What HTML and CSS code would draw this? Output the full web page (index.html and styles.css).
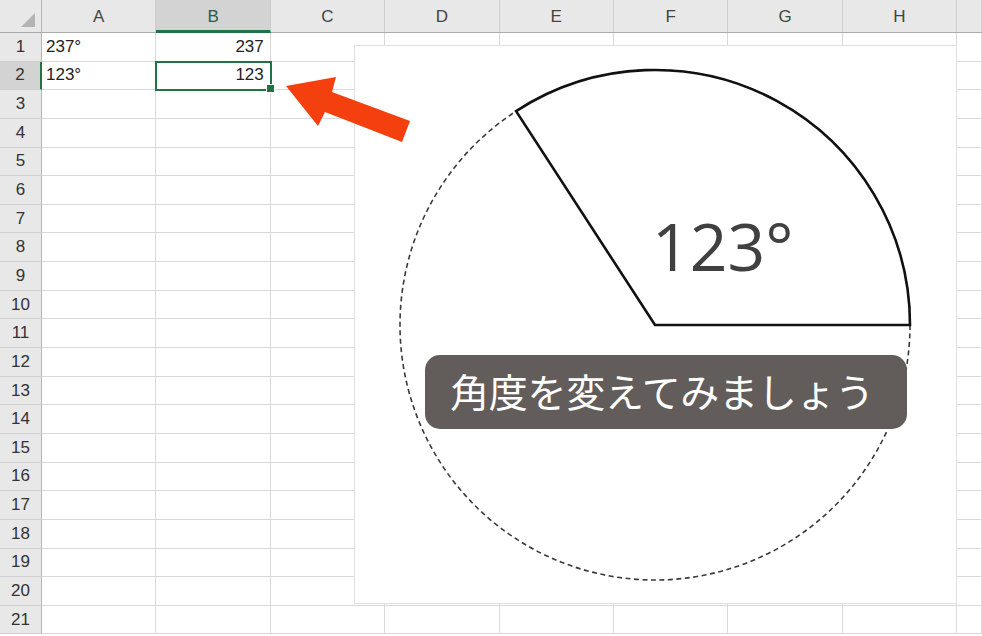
FILE: index.html
```html
<!DOCTYPE html>
<html lang="ja">
<head>
<meta charset="utf-8">
<title>角度</title>
<link rel="stylesheet" href="styles.css">
</head>
<body>
<div class="sheet">
  <div class="row head">
    <div class="corner"><span class="tri"></span></div>
    <div class="ch">A</div><div class="ch sel">B</div><div class="ch">C</div><div class="ch">D</div><div class="ch">E</div><div class="ch">F</div><div class="ch">G</div><div class="ch">H</div><div class="ch"></div>
  </div>
  <div class="row"><div class="rh">1</div><div class="c">237°</div><div class="c num">237</div><div class="c"></div><div class="c"></div><div class="c"></div><div class="c"></div><div class="c"></div><div class="c"></div><div class="c"></div></div>
  <div class="row"><div class="rh sel">2</div><div class="c">123°</div><div class="c num active">123<span class="handle"></span></div><div class="c"></div><div class="c"></div><div class="c"></div><div class="c"></div><div class="c"></div><div class="c"></div><div class="c"></div></div>
  <div class="row"><div class="rh">3</div><div class="c"></div><div class="c"></div><div class="c"></div><div class="c"></div><div class="c"></div><div class="c"></div><div class="c"></div><div class="c"></div><div class="c"></div></div>
  <div class="row"><div class="rh">4</div><div class="c"></div><div class="c"></div><div class="c"></div><div class="c"></div><div class="c"></div><div class="c"></div><div class="c"></div><div class="c"></div><div class="c"></div></div>
  <div class="row"><div class="rh">5</div><div class="c"></div><div class="c"></div><div class="c"></div><div class="c"></div><div class="c"></div><div class="c"></div><div class="c"></div><div class="c"></div><div class="c"></div></div>
  <div class="row"><div class="rh">6</div><div class="c"></div><div class="c"></div><div class="c"></div><div class="c"></div><div class="c"></div><div class="c"></div><div class="c"></div><div class="c"></div><div class="c"></div></div>
  <div class="row"><div class="rh">7</div><div class="c"></div><div class="c"></div><div class="c"></div><div class="c"></div><div class="c"></div><div class="c"></div><div class="c"></div><div class="c"></div><div class="c"></div></div>
  <div class="row"><div class="rh">8</div><div class="c"></div><div class="c"></div><div class="c"></div><div class="c"></div><div class="c"></div><div class="c"></div><div class="c"></div><div class="c"></div><div class="c"></div></div>
  <div class="row"><div class="rh">9</div><div class="c"></div><div class="c"></div><div class="c"></div><div class="c"></div><div class="c"></div><div class="c"></div><div class="c"></div><div class="c"></div><div class="c"></div></div>
  <div class="row"><div class="rh">10</div><div class="c"></div><div class="c"></div><div class="c"></div><div class="c"></div><div class="c"></div><div class="c"></div><div class="c"></div><div class="c"></div><div class="c"></div></div>
  <div class="row"><div class="rh">11</div><div class="c"></div><div class="c"></div><div class="c"></div><div class="c"></div><div class="c"></div><div class="c"></div><div class="c"></div><div class="c"></div><div class="c"></div></div>
  <div class="row"><div class="rh">12</div><div class="c"></div><div class="c"></div><div class="c"></div><div class="c"></div><div class="c"></div><div class="c"></div><div class="c"></div><div class="c"></div><div class="c"></div></div>
  <div class="row"><div class="rh">13</div><div class="c"></div><div class="c"></div><div class="c"></div><div class="c"></div><div class="c"></div><div class="c"></div><div class="c"></div><div class="c"></div><div class="c"></div></div>
  <div class="row"><div class="rh">14</div><div class="c"></div><div class="c"></div><div class="c"></div><div class="c"></div><div class="c"></div><div class="c"></div><div class="c"></div><div class="c"></div><div class="c"></div></div>
  <div class="row"><div class="rh">15</div><div class="c"></div><div class="c"></div><div class="c"></div><div class="c"></div><div class="c"></div><div class="c"></div><div class="c"></div><div class="c"></div><div class="c"></div></div>
  <div class="row"><div class="rh">16</div><div class="c"></div><div class="c"></div><div class="c"></div><div class="c"></div><div class="c"></div><div class="c"></div><div class="c"></div><div class="c"></div><div class="c"></div></div>
  <div class="row"><div class="rh">17</div><div class="c"></div><div class="c"></div><div class="c"></div><div class="c"></div><div class="c"></div><div class="c"></div><div class="c"></div><div class="c"></div><div class="c"></div></div>
  <div class="row"><div class="rh">18</div><div class="c"></div><div class="c"></div><div class="c"></div><div class="c"></div><div class="c"></div><div class="c"></div><div class="c"></div><div class="c"></div><div class="c"></div></div>
  <div class="row"><div class="rh">19</div><div class="c"></div><div class="c"></div><div class="c"></div><div class="c"></div><div class="c"></div><div class="c"></div><div class="c"></div><div class="c"></div><div class="c"></div></div>
  <div class="row"><div class="rh">20</div><div class="c"></div><div class="c"></div><div class="c"></div><div class="c"></div><div class="c"></div><div class="c"></div><div class="c"></div><div class="c"></div><div class="c"></div></div>
  <div class="row"><div class="rh">21</div><div class="c"></div><div class="c"></div><div class="c"></div><div class="c"></div><div class="c"></div><div class="c"></div><div class="c"></div><div class="c"></div><div class="c"></div></div>

  <div class="figure">
    <svg class="pie" width="603" height="559" viewBox="0 0 603 559">
      <circle cx="301" cy="280" r="255" fill="none" stroke="#3a3a3a" stroke-width="1.6" stroke-dasharray="5 3.5"/>
      <path d="M 301 280 L 556 280 A 255 255 0 0 0 162.1 66.1 Z" fill="#ffffff" stroke="#111" stroke-width="2.6" stroke-linejoin="miter"/>
      <text class="deg" x="298" y="226">123°</text>
    </svg>
    <div class="label">角度を変えてみましょう</div>
  </div>

  <svg class="arrow" width="140" height="80" viewBox="280 70 140 80">
    <polygon points="286,86 336,77 332,92 410,121 402,142 325,112 318,126" fill="#f4400f"/>
  </svg>
</div>
</body>
</html>
```

FILE: styles.css
```css
html, body {
  margin: 0;
  padding: 0;
  background: #ffffff;
  overflow: hidden;
}

.sheet {
  position: relative;
  width: 982px;
  height: 636px;
  font-family: "Liberation Sans", Arial, sans-serif;
  color: #222;
}

.row {
  display: grid;
  grid-template-columns: 42px repeat(8, 114.4px) 1fr;
  height: 28.65px;
}

.row.head {
  height: 33px;
  background: #e8e8e8;
  box-sizing: border-box;
  border-bottom: 1px solid #ababab;
}

.corner {
  position: relative;
  border-right: 1px solid #b5b5b5;
}

.tri {
  position: absolute;
  right: 6px;
  bottom: 5px;
  width: 0;
  height: 0;
  border-left: 14px solid transparent;
  border-bottom: 14px solid #b3b3b3;
}

.ch {
  display: flex;
  align-items: center;
  justify-content: center;
  font-size: 17px;
  color: #444;
  border-right: 1px solid #cdcdcd;
  padding-top: 2px;
  box-sizing: border-box;
}

.ch.sel {
  background: #d3d3d3;
  color: #2e5b45;
  border-bottom: 3px solid #217346;
  margin-bottom: -1px;
  padding-top: 4px;
}

.rh {
  display: flex;
  align-items: center;
  justify-content: center;
  background: #e8e8e8;
  font-size: 17px;
  color: #333;
  border-right: 1px solid #b5b5b5;
  border-bottom: 1px solid #cfcfcf;
  box-sizing: border-box;
}

.rh.sel {
  background: #d3d3d3;
  border-right: 2px solid #217346;
}

.c {
  position: relative;
  display: flex;
  align-items: center;
  padding: 0 4px;
  font-size: 17px;
  color: #222;
  border-right: 1px solid #d9d9d9;
  border-bottom: 1px solid #d9d9d9;
  box-sizing: border-box;
  white-space: nowrap;
}

.c.num {
  justify-content: flex-end;
  padding-right: 6px;
}

.c.active {
  outline: 2px solid #217346;
  outline-offset: -1px;
  z-index: 1;
}

.handle {
  position: absolute;
  right: -5px;
  bottom: -4px;
  width: 7px;
  height: 7px;
  background: #217346;
  border: 1px solid #ffffff;
}

.figure {
  position: absolute;
  left: 354px;
  top: 45px;
  width: 603px;
  height: 559px;
  background: #ffffff;
  box-sizing: border-box;
  border: 1px solid #e0e0e0;
  z-index: 2;
}

.pie {
  position: absolute;
  left: -1px;
  top: -1px;
}

.deg {
  font-family: "Open Sans", "Liberation Sans", sans-serif;
  font-size: 66px;
  fill: #404040;
}

.label {
  position: absolute;
  left: 70px;
  top: 309px;
  width: 482px;
  height: 74px;
  border-radius: 15px;
  background: #625d5a;
  color: #ffffff;
  font-family: "Noto Sans CJK JP", sans-serif;
  font-size: 39px;
  letter-spacing: -0.3px;
  display: flex;
  align-items: center;
  justify-content: center;
  padding-right: 8px;
  padding-bottom: 5px;
  box-sizing: border-box;
}

.arrow {
  position: absolute;
  left: 280px;
  top: 70px;
  z-index: 3;
}
```
